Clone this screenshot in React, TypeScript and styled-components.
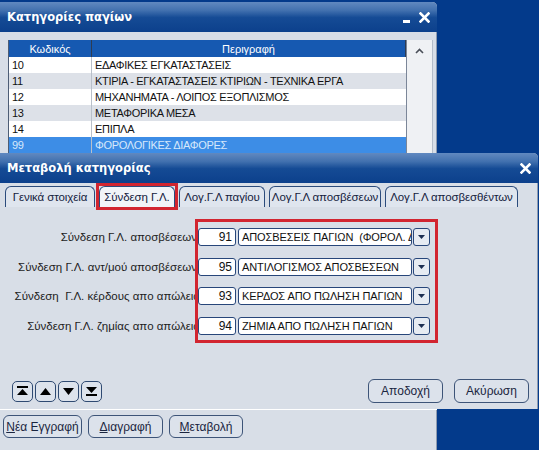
import React from 'react'
import styled, { createGlobalStyle } from 'styled-components'

const GlobalStyle = createGlobalStyle`
  html, body {
    margin: 0;
    padding: 0;
  }
  body {
    background: #033a8b;
    font-family: "Liberation Sans", Arial, sans-serif;
  }
`

const categories = [
  { code: '10', name: 'ΕΔΑΦΙΚΕΣ ΕΓΚΑΤΑΣΤΑΣΕΙΣ' },
  { code: '11', name: 'ΚΤΙΡΙΑ - ΕΓΚΑΤΑΣΤΑΣΕΙΣ ΚΤΙΡΙΩΝ - ΤΕΧΝΙΚΑ ΕΡΓΑ' },
  { code: '12', name: 'ΜΗΧΑΝΗΜΑΤΑ - ΛΟΙΠΟΣ ΕΞΟΠΛΙΣΜΟΣ' },
  { code: '13', name: 'ΜΕΤΑΦΟΡΙΚΑ ΜΕΣΑ' },
  { code: '14', name: 'ΕΠΙΠΛΑ' },
  { code: '99', name: 'ΦΟΡΟΛΟΓΙΚΕΣ ΔΙΑΦΟΡΕΣ' },
]

const links = [
  { label: 'Σύνδεση Γ.Λ. αποσβέσεων', code: '91', name: 'ΑΠΟΣΒΕΣΕΙΣ ΠΑΓΙΩΝ  (ΦΟΡΟΛ. ΔΙΑΦΟΡΕΣ)', inset: 7 },
  { label: 'Σύνδεση Γ.Λ. αντ/μού αποσβέσεων', code: '95', name: 'ΑΝΤΙΛΟΓΙΣΜΟΣ ΑΠΟΣΒΕΣΕΩΝ', inset: 7 },
  { label: 'Σύνδεση  Γ.Λ. κέρδους απο απώλεια', code: '93', name: 'ΚΕΡΔΟΣ ΑΠΟ ΠΩΛΗΣΗ ΠΑΓΙΩΝ', inset: 4 },
  { label: 'Σύνδεση Γ.Λ. ζημίας απο απώλεια', code: '94', name: 'ΖΗΜΙΑ ΑΠΟ ΠΩΛΗΣΗ ΠΑΓΙΩΝ', inset: 4 },
]

const tabs = [
  { title: 'Γενικά στοιχεία', width: 90 },
  { title: 'Σύνδεση Γ.Λ.', width: 76, active: true },
  { title: 'Λογ.Γ.Λ παγίου', width: 86 },
  { title: 'Λογ.Γ.Λ αποσβέσεων', width: 112 },
  { title: 'Λογ.Γ.Λ αποσβεσθέντων', width: 133 },
]

const CloseIcon = () => (
  <svg width="11" height="11" viewBox="0 0 11 11">
    <path d="M1.5 1.5 L9.5 9.5 M9.5 1.5 L1.5 9.5" stroke="#fff" strokeWidth="2.6" strokeLinecap="square" />
  </svg>
)

const App: React.FunctionComponent = () => {
  return (
    <Desktop>
      <GlobalStyle />
      <Window $top={2} $width={437} $height={448}>
        <TitleBar>
          <TitleText>Κατηγορίες παγίων</TitleText>
          <MinimizeMark />
          <CloseIcon />
        </TitleBar>
        <ListArea>
          <Grid>
            <HeaderRow>
              <HeaderCell>Κωδικός</HeaderCell>
              <HeaderCell>Περιγραφή</HeaderCell>
            </HeaderRow>
            {categories.map((c, i) => (
              <Row key={c.code} $striped={i % 2 === 1} $selected={c.code === '99'}>
                <CodeCell>{c.code}</CodeCell>
                <NameCell>{c.name}</NameCell>
              </Row>
            ))}
          </Grid>
          <ScrollBar>
            <svg width="9" height="6" viewBox="0 0 9 6">
              <path d="M1 5 L4.5 1.5 L8 5" fill="none" stroke="#4a4f58" strokeWidth="1.6" />
            </svg>
          </ScrollBar>
        </ListArea>
        <BottomBar>
          <Button $width={79}><u>Ν</u>έα Εγγραφή</Button>
          <Button $width={75}><u>Δ</u>ιαγραφή</Button>
          <Button $width={74}><u>Μ</u>εταβολή</Button>
        </BottomBar>
      </Window>

      <Window $top={153} $width={538} $height={256}>
        <TitleBar>
          <TitleText>Μεταβολή κατηγορίας</TitleText>
          <CloseIcon />
        </TitleBar>
        <TabRow>
          {tabs.map(t =>
            t.active ? (
              <Marked key={t.title}>
                <Tab $width={t.width} $active>{t.title}</Tab>
              </Marked>
            ) : (
              <Tab key={t.title} $width={t.width}>{t.title}</Tab>
            )
          )}
        </TabRow>
        <Form>
          <LabelColumn>
            {links.map(l => (
              <FieldLabel key={l.label} $inset={l.inset}>{l.label}</FieldLabel>
            ))}
          </LabelColumn>
          <RedBox>
            {links.map(l => (
              <FieldRow key={l.code}>
                <CodeBox>{l.code}</CodeBox>
                <DescBox>{l.name}</DescBox>
                <DropButton>
                  <svg width="7" height="4" viewBox="0 0 7 4">
                    <path d="M0 0 H7 L3.5 4 Z" fill="#1d2f52" />
                  </svg>
                </DropButton>
              </FieldRow>
            ))}
          </RedBox>
        </Form>
        <ActionRow>
          <NavGroup>
            <NavButton>
              <svg width="11" height="10" viewBox="0 0 11 10">
                <rect x="0" y="0" width="11" height="2" fill="#000" />
                <path d="M0 9 L5.5 3 L11 9 Z" fill="#000" />
              </svg>
            </NavButton>
            <NavButton>
              <svg width="11" height="7" viewBox="0 0 11 7">
                <path d="M0 7 L5.5 0 L11 7 Z" fill="#000" />
              </svg>
            </NavButton>
            <NavButton>
              <svg width="11" height="7" viewBox="0 0 11 7">
                <path d="M0 0 L5.5 7 L11 0 Z" fill="#000" />
              </svg>
            </NavButton>
            <NavButton>
              <svg width="11" height="10" viewBox="0 0 11 10">
                <path d="M0 1 L5.5 7 L11 1 Z" fill="#000" />
                <rect x="0" y="8" width="11" height="2" fill="#000" />
              </svg>
            </NavButton>
          </NavGroup>
          <ActionGroup>
            <Button $width={75} $height={24}>Αποδοχή</Button>
            <Button $width={75} $height={24}>Ακύρωση</Button>
          </ActionGroup>
        </ActionRow>
      </Window>
    </Desktop>
  )
}

export default App

const Desktop = styled.div`
  position: relative;
  width: 539px;
  height: 450px;
  overflow: hidden;
  background: #033a8b;
`

const Window = styled.div<{ $top: number; $width: number; $height: number }>`
  position: absolute;
  left: 0;
  top: ${p => p.$top}px;
  width: ${p => p.$width}px;
  height: ${p => p.$height}px;
  display: flex;
  flex-direction: column;
  background: #d8dee7;
  border-radius: 0 5px 0 0;
  overflow: hidden;
  box-shadow: inset -1px 0 0 #8e9bb0;
`

const TitleBar = styled.div`
  height: 30px;
  flex: none;
  display: flex;
  align-items: center;
  gap: 9px;
  padding: 0 7px 0 7px;
  color: #fff;
  background: linear-gradient(to bottom, #6189c0 0%, #4271af 28%, #154b95 52%, #0c408c 100%);
`

const TitleText = styled.div`
  flex: 1;
  font-family: "DejaVu Sans", Verdana, sans-serif;
  font-weight: bold;
  font-size: 11.5px;
`

const MinimizeMark = styled.span`
  width: 7px;
  height: 3px;
  margin-top: 9px;
  background: #fff;
`

const ListArea = styled.div`
  flex: 1;
  min-height: 0;
  display: flex;
  padding: 8px 4px 0 8px;
`

const Grid = styled.div`
  flex: 1;
  background: #fff;
  border-left: 1px solid #4d5d75;
`

const HeaderRow = styled.div`
  display: grid;
  grid-template-columns: 83px 1fr;
  height: 17px;
  background: #1659b1;
  color: #fff;
  font-size: 11px;
`

const HeaderCell = styled.div`
  display: flex;
  align-items: center;
  justify-content: center;
  border-right: 1px solid #2e3c52;
`

const Row = styled.div<{ $striped: boolean; $selected: boolean }>`
  display: grid;
  grid-template-columns: 83px 1fr;
  height: 16px;
  font-size: 11px;
  letter-spacing: -0.3px;
  color: ${p => (p.$selected ? '#d6e8fb' : '#111')};
  background: ${p => (p.$selected ? '#3d8de6' : p.$striped ? '#dde1e8' : '#fff')};
`

const CodeCell = styled.div`
  display: flex;
  align-items: center;
  padding-left: 3px;
  border-right: 1px solid #b9c0ca;
`

const NameCell = styled.div`
  display: flex;
  align-items: center;
  padding-left: 3px;
  white-space: nowrap;
  overflow: hidden;
`

const ScrollBar = styled.div`
  width: 25px;
  display: flex;
  justify-content: center;
  padding-top: 8px;
  background: #eff1f4;
  border-left: 1px solid #7b8698;
  border-right: 1px solid #b3bcc9;
`

const BottomBar = styled.div`
  height: 41px;
  flex: none;
  box-sizing: border-box;
  display: flex;
  align-items: flex-start;
  gap: 6px;
  padding: 5px 3px;
  border-top: 1px solid #fff;
`

const Button = styled.button<{ $width: number; $height?: number }>`
  width: ${p => p.$width}px;
  height: ${p => p.$height ?? 23}px;
  padding: 0;
  border: 1px solid #3d5478;
  border-radius: 6px;
  background: #dce2eb;
  color: #1a2540;
  font-family: "Liberation Sans", Arial, sans-serif;
  font-size: 12px;
  u {
    text-decoration: underline;
  }
`

const TabRow = styled.div`
  display: flex;
  align-items: flex-end;
  gap: 4px;
  height: 21px;
  padding: 3px 0 0 5px;
`

const Marked = styled.div`
  position: relative;
  display: flex;
  &::after {
    content: '';
    position: absolute;
    inset: -3px;
    border: 3px solid #d22530;
    pointer-events: none;
  }
`

const Tab = styled.div<{ $width: number; $active?: boolean }>`
  width: ${p => p.$width}px;
  height: 21px;
  box-sizing: border-box;
  display: flex;
  align-items: center;
  justify-content: center;
  border: 1px solid #2b4b7c;
  border-bottom: none;
  border-radius: 6px 6px 0 0;
  background: ${p => (p.$active ? '#f1f4f8' : '#dfe5ee')};
  color: #14213d;
  font-size: 11.5px;
  letter-spacing: -0.1px;
  white-space: nowrap;
`

const Form = styled.div`
  display: flex;
  margin-top: 12px;
`

const LabelColumn = styled.div`
  width: 204px;
  display: flex;
  flex-direction: column;
  gap: 11.5px;
  padding-top: 9px;
  overflow: hidden;
`

const FieldLabel = styled.div<{ $inset: number }>`
  height: 18px;
  display: flex;
  align-items: center;
  justify-content: flex-end;
  padding-right: ${p => p.$inset}px;
  font-size: 11.5px;
  color: #1c1c1c;
  white-space: pre;
`

const RedBox = styled.div`
  position: relative;
  margin-left: -9px;
  display: flex;
  flex-direction: column;
  gap: 11.5px;
  padding: 6px 5px 5px 0;
  border: 3px solid #d22530;
`

const FieldRow = styled.div`
  display: flex;
  height: 18px;
`

const fieldBox = `
  height: 18px;
  box-sizing: border-box;
  display: flex;
  align-items: center;
  border: 1px solid #27467a;
  border-radius: 3px;
  background: #fff;
  color: #111;
  white-space: pre;
  overflow: hidden;
`

const CodeBox = styled.div`
  ${fieldBox}
  width: 38px;
  justify-content: flex-end;
  padding-right: 3px;
  font-size: 12px;
`

const DescBox = styled.div`
  ${fieldBox}
  width: 174px;
  margin-left: 2px;
  padding-left: 3px;
  font-size: 11px;
  letter-spacing: -0.1px;
`

const DropButton = styled.div`
  ${fieldBox}
  width: 17px;
  margin-left: 1px;
  justify-content: center;
  background: #e6ebf2;
`

const ActionRow = styled.div`
  margin-top: auto;
  display: flex;
  align-items: center;
  justify-content: space-between;
  padding: 0 9px 6px 12px;
`

const NavGroup = styled.div`
  display: flex;
  gap: 2px;
`

const NavButton = styled.div`
  width: 21px;
  height: 21px;
  box-sizing: border-box;
  display: flex;
  align-items: center;
  justify-content: center;
  border: 1px solid #2f4a72;
  border-radius: 5px;
  background: #dde3ec;
`

const ActionGroup = styled.div`
  display: flex;
  gap: 11px;
`
